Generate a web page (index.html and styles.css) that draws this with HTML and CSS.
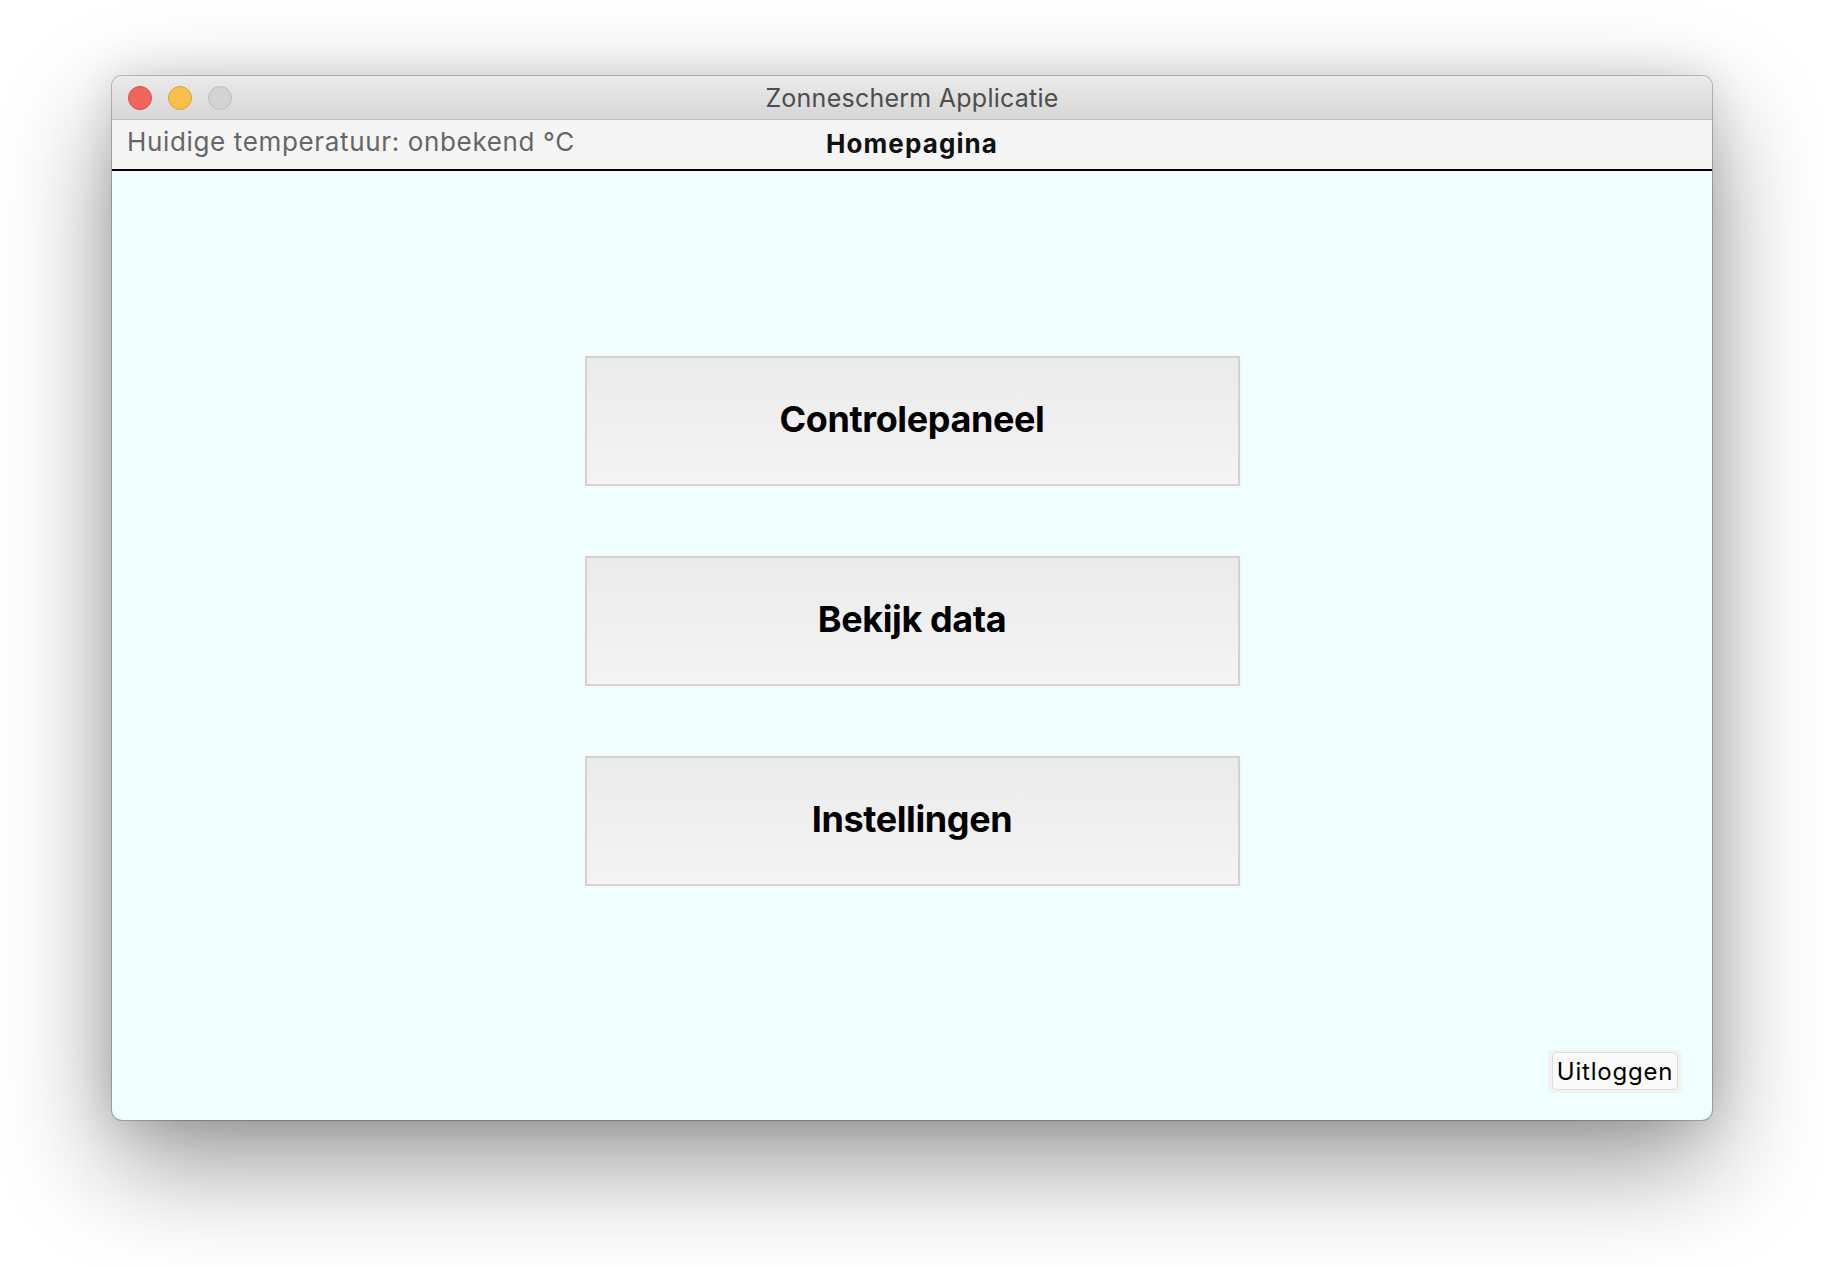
FILE: index.html
```html
<!DOCTYPE html>
<html lang="nl">
<head>
<meta charset="utf-8">
<title>Zonnescherm Applicatie</title>
<link rel="stylesheet" href="styles.css">
</head>
<body>
<div class="window">
  <div class="titlebar">
    <div class="lights">
      <span class="light red"></span>
      <span class="light yellow"></span>
      <span class="light gray"></span>
    </div>
    <div class="title">Zonnescherm Applicatie</div>
  </div>
  <div class="header">
    <div class="temp">Huidige temperatuur: onbekend °C</div>
    <div class="page">Homepagina</div>
    <div></div>
  </div>
  <div class="content">
    <div class="menu">
      <button class="big">Controlepaneel</button>
      <button class="big">Bekijk data</button>
      <button class="big">Instellingen</button>
    </div>
    <div class="footer">
      <div class="halo"><button class="small">Uitloggen</button></div>
    </div>
  </div>
</div>
</body>
</html>
```
FILE: styles.css
```css
html, body {
  margin: 0;
  padding: 0;
  background: #ffffff;
}
body {
  width: 1824px;
  height: 1268px;
  overflow: hidden;
  font-family: Inter, "Liberation Sans", sans-serif;
}
.window {
  margin: 76px 0 0 112px;
  width: 1600px;
  height: 1044px;
  border-radius: 10px;
  overflow: hidden;
  display: flex;
  flex-direction: column;
  box-shadow: 0 0 0 1px rgba(0,0,0,0.22), 0 42px 110px rgba(0,0,0,0.42), 0 0 40px rgba(0,0,0,0.12);
  background: #f0ffff;
}
.titlebar {
  height: 43px;
  border-bottom: 1px solid #c4c4c4;
  background: linear-gradient(#ebebeb, #d6d6d6);
  display: flex;
  align-items: center;
  position: relative;
}
.lights {
  display: flex;
  gap: 16px;
  padding-left: 16px;
  padding-top: 1px;
}
.light {
  width: 22px;
  height: 22px;
  border-radius: 50%;
  display: block;
}
.red { background: #f0665c; border: 1px solid #dc4c42; }
.yellow { background: #f9bf4c; border: 1px solid #dea236; }
.gray { background: #d3d3d3; border: 1px solid #bfbfbf; }
.title {
  position: absolute;
  left: 0;
  right: 0;
  top: 0;
  bottom: 0;
  display: flex;
  align-items: center;
  justify-content: center;
  font-size: 25px;
  color: #4d4d4d;
  letter-spacing: 0.25px;
}
.header {
  height: 49px;
  border-bottom: 2px solid #000;
  background: #f5f5f5;
  display: grid;
  grid-template-columns: 1fr auto 1fr;
  align-items: start;
}
.temp {
  padding-left: 15px;
  padding-top: 6px;
  font-size: 26px;
  letter-spacing: 0.65px;
  color: #666666;
}
.page {
  padding-top: 8px;
  font-size: 26px;
  letter-spacing: 1.1px;
  font-weight: 700;
  color: #111;
}
.content {
  flex: 1;
  display: flex;
  flex-direction: column;
}
.menu {
  display: flex;
  flex-direction: column;
  align-items: center;
  gap: 70px;
  padding-top: 185px;
  flex: 1;
}
.big {
  width: 655px;
  height: 130px;
  border: 2px solid #d2d2d2;
  box-shadow: 0 0 0 2px #f7f8f8;
  background: linear-gradient(#ebebeb, #f4f4f4);
  font-family: Inter, "Liberation Sans", sans-serif;
  font-weight: 700;
  font-size: 36px;
  letter-spacing: -0.4px;
  color: #000;
  padding: 0 0 4px 0;
  margin: 0;
}
.footer {
  display: flex;
  justify-content: flex-end;
  padding: 0 30px 27px 0;
}
.halo {
  background: #f3f3f3;
  padding: 2px 4px 3px 4px;
  display: flex;
}
.small {
  width: 126px;
  height: 38px;
  border: 1px solid #dddddd;
  border-radius: 5px;
  background: #fafafa;
  font-family: Inter, "Liberation Sans", sans-serif;
  font-size: 24px;
  letter-spacing: 0.8px;
  color: #000;
  padding: 0;
  margin: 0;
}
```
